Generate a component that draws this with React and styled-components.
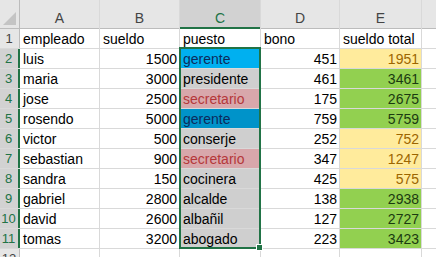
import styled, { createGlobalStyle } from "styled-components"

const Global = createGlobalStyle`
    html, body {
        margin: 0;
        padding: 0;
        background: #fff;
        overflow: hidden;
    }
    body {
        font-family: "Liberation Sans", Arial, sans-serif;
    }
`

const Sheet = styled.div`
    display: grid;
    grid-template-columns: 19px 79px 79px 80px 78px 81px 1fr;
    grid-template-rows: 28px repeat(11, 19px) 19px;
    gap: 1px;
    background-color: #d9d9d9;
    width: 436px;
    height: 257px;
    overflow: hidden;
    font-size: 14px;
`

const Corner = styled.div`
    grid-row: 1;
    grid-column: 1;
    background-color: #e6e6e6;
    padding-top: 8px;
    display: flex;
    align-items: flex-end;
    justify-content: flex-end;
    border-right: 1px solid #bcbcbc;
    border-bottom: 1px solid #bcbcbc;
    margin: 0 -1px -1px 0;

    .tri {
        width: 0;
        height: 0;
        border-left: 13px solid transparent;
        border-bottom: 13px solid #c4c4c4;
        margin: 0 3px 3px 0;
    }
`

const ColHead = styled.div`
    grid-row: 1;
    grid-column: ${(p) => p.c};
    background-color: ${(p) => (p.sel ? "#d2d2d2" : "#e6e6e6")};
    color: ${(p) => (p.sel ? "#217346" : "#444")};
    display: flex;
    align-items: center;
    justify-content: center;
    padding-top: 8px;
    font-size: 14px;
    border-bottom: ${(p) => (p.sel ? "2px solid #217346" : "1px solid #bcbcbc")};
    margin-bottom: -1px;
`

const RowHead = styled.div`
    grid-row: ${(p) => p.r};
    grid-column: 1;
    background-color: ${(p) => (p.sel ? "#d2d2d2" : "#e6e6e6")};
    color: ${(p) => (p.sel ? "#217346" : "#444")};
    border-right: ${(p) => (p.sel ? "2px solid #217346" : "1px solid #bcbcbc")};
    margin-right: -1px;
    display: flex;
    align-items: center;
    justify-content: center;
    font-size: 13px;
    padding-right: 1px;
`

const Cell = styled.div`
    grid-row: ${(p) => p.r};
    grid-column: ${(p) => p.c};
    background-color: ${(p) => p.bg || "#fff"};
    color: ${(p) => p.fg || "#000"};
    display: flex;
    align-items: center;
    justify-content: ${(p) => (p.num ? "flex-end" : "flex-start")};
    padding: 1px 2px 0 3px;
    white-space: nowrap;
    overflow: hidden;
`

const Selection = styled.div`
    grid-column: 4;
    grid-row: 3 / 13;
    margin: -2px -1px -1px -1px;
    border: 2px solid #217346;
    position: relative;
    pointer-events: none;
`

const Handle = styled.span`
    position: absolute;
    right: -4px;
    bottom: -4px;
    width: 5px;
    height: 5px;
    background: #217346;
    border: 1px solid #fff;
`

const PUESTO = {
    gerente: { bg: "#0093c9", fg: "#0d2a5c" },
    secretario: { bg: "#d8a7ab", fg: "#b5373a" },
}

const rows = [
    ["luis", 1500, "gerente", 451, 1951],
    ["maria", 3000, "presidente", 461, 3461],
    ["jose", 2500, "secretario", 175, 2675],
    ["rosendo", 5000, "gerente", 759, 5759],
    ["victor", 500, "conserje", 252, 752],
    ["sebastian", 900, "secretario", 347, 1247],
    ["sandra", 150, "cocinera", 425, 575],
    ["gabriel", 2800, "alcalde", 138, 2938],
    ["david", 2600, "albañil", 127, 2727],
    ["tomas", 3200, "abogado", 223, 3423],
]

const totalStyle = (v) =>
    v < 2000 ? { bg: "#ffeb9c", fg: "#9c6500" } : { bg: "#92d050", fg: "#1b3a10" }

function App() {
    return (
        <>
            <Global />
            <Sheet>
                <Corner><span className="tri" /></Corner>
                {["A", "B", "C", "D", "E", ""].map((c, i) => (
                    <ColHead key={i} c={i + 2} sel={c === "C"}>{c}</ColHead>
                ))}

                <RowHead r={2}>1</RowHead>
                <Cell r={2} c={2}>empleado</Cell>
                <Cell r={2} c={3}>sueldo</Cell>
                <Cell r={2} c={4}>puesto</Cell>
                <Cell r={2} c={5}>bono</Cell>
                <Cell r={2} c={6}>sueldo total</Cell>
                <Cell r={2} c={7} />

                {rows.map((row, i) => {
                    const r = i + 3
                    let p = PUESTO[row[2]] || { bg: "#cfcfcf" }
                    // active cell keeps its own fill, the rest of the selection is tinted
                    if (i === 0) p = { bg: "#00b0f0", fg: "#0d2a5c" }
                    const t = totalStyle(row[4])
                    return [
                        <RowHead key={`h${i}`} r={r} sel>{i + 2}</RowHead>,
                        <Cell key={`a${i}`} r={r} c={2}>{row[0]}</Cell>,
                        <Cell key={`b${i}`} r={r} c={3} num>{row[1]}</Cell>,
                        <Cell key={`c${i}`} r={r} c={4} bg={p.bg} fg={p.fg}>{row[2]}</Cell>,
                        <Cell key={`d${i}`} r={r} c={5} num>{row[3]}</Cell>,
                        <Cell key={`e${i}`} r={r} c={6} num bg={t.bg} fg={t.fg}>{row[4]}</Cell>,
                        <Cell key={`f${i}`} r={r} c={7} />,
                    ]
                })}

                <RowHead r={13}>12</RowHead>
                {[2, 3, 4, 5, 6, 7].map((c) => (
                    <Cell key={c} r={13} c={c} />
                ))}

                <Selection><Handle /></Selection>
            </Sheet>
        </>
    )
}

export default App
